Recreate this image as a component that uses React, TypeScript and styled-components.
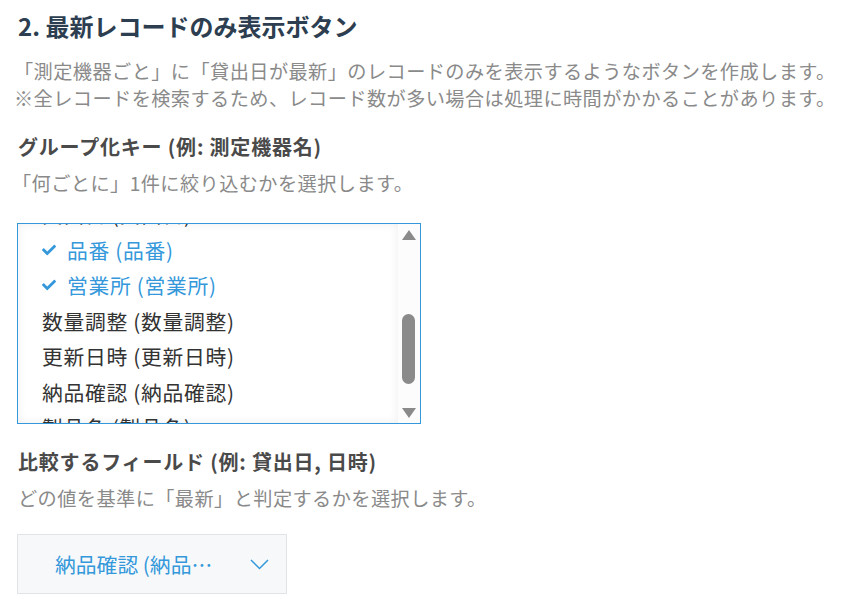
import styled, { createGlobalStyle } from "styled-components";
import { useEffect, useRef } from "react";
import { FaCheck } from "react-icons/fa";

const GlobalStyle = createGlobalStyle`
  body {
    margin: 0;
    background: #ffffff;
    font-family: "Noto Sans CJK JP", "Noto Sans", sans-serif;
  }
`;

const Section = styled.div`
  padding: 11px 18px 0;
`;

const Title = styled.h2`
  margin: 0;
  font-size: 24px;
  line-height: 29px;
  font-weight: 700;
  color: #2c3e50;
`;

const Description = styled.p`
  margin: 18px 0 0 -4px;
  font-size: 19.2px;
  line-height: 27px;
  letter-spacing: 0.42px;
  white-space: nowrap;
  color: #8a8a8a;
`;

const Field = styled.div<{ $gap: number }>`
  margin-top: ${(p) => p.$gap}px;
`;

const Label = styled.h3`
  margin: 0;
  font-size: 20px;
  line-height: 28px;
  font-weight: 700;
  letter-spacing: 0.8px;
  color: #4a4a4a;
`;

const Hint = styled.p<{ $indent?: number }>`
  margin: 9px 0 0 ${(p) => p.$indent ?? 0}px;
  font-size: 19.2px;
  line-height: 27px;
  letter-spacing: 0.42px;
  color: #8a8a8a;
`;

const ListFrame = styled.div`
  display: flex;
  margin: 26px 0 0 -1px;
  width: 402px;
  height: 199px;
  border: 1px solid #3498db;
  background: #ffffff;
`;

const ListBox = styled.ul`
  flex: 1;
  margin: 0;
  padding: 0;
  list-style: none;
  overflow: hidden;
  box-shadow: inset 0 0 10px rgba(0, 0, 0, 0.07);
`;

const Option = styled.li<{ $selected: boolean }>`
  display: flex;
  align-items: center;
  gap: 11px;
  padding-left: 24px;
  height: 35.5px;
  font-size: 20.8px;
  letter-spacing: 0.7px;
  color: ${(p) => (p.$selected ? "#3498db" : "#333333")};
  white-space: nowrap;
`;

const ScrollBar = styled.div`
  display: flex;
  flex-direction: column;
  align-items: center;
  width: 22px;
  padding: 6px 0 5px;
  background: #fcfcfc;
`;

const Arrow = styled.div<{ $down?: boolean }>`
  width: 0;
  height: 0;
  border-left: 7px solid transparent;
  border-right: 7px solid transparent;
  ${(p) =>
    p.$down
      ? "border-top: 10px solid #8a8a8a;"
      : "border-bottom: 10px solid #8a8a8a;"}
`;

const Track = styled.div`
  flex: 1;
  display: flex;
  justify-content: center;
`;

const Thumb = styled.div<{ $offset: number; $size: number }>`
  margin-top: ${(p) => p.$offset}px;
  margin-right: 1px;
  width: 13px;
  height: ${(p) => p.$size}px;
  border-radius: 7px;
  background: #8a8a8a;
`;

const SelectButton = styled.button`
  display: flex;
  align-items: center;
  margin-top: 22px;
  margin-left: -1px;
  width: 270px;
  height: 60px;
  padding: 0 17px 0 37px;
  border: 1px solid #e1e3e6;
  background: #f7f8fa;
  font-family: inherit;
  font-size: 20.8px;
  color: #3498db;
  cursor: pointer;
`;

const ButtonText = styled.span`
  max-width: 166px;
  overflow: hidden;
  text-overflow: ellipsis;
  white-space: nowrap;
`;

const Chevron = styled.svg`
  margin-left: auto;
`;

const fields = [
  { name: "レコード番号", selected: false },
  { name: "測定機器名", selected: false },
  { name: "貸出者", selected: false },
  { name: "返却予定日", selected: false },
  { name: "備考", selected: false },
  { name: "貸出日", selected: false },
  { name: "品番", selected: true },
  { name: "営業所", selected: true },
  { name: "数量調整", selected: false },
  { name: "更新日時", selected: false },
  { name: "納品確認", selected: false },
  { name: "製品名", selected: false },
  { name: "作成日時", selected: false },
];

export default function App() {
  const listRef = useRef<HTMLUListElement>(null);

  useEffect(() => {
    if (listRef.current) listRef.current.scrollTop = 205;
  }, []);

  return (
    <Section>
      <GlobalStyle />
      <Title>2. 最新レコードのみ表示ボタン</Title>
      <Description>
        「測定機器ごと」に「貸出日が最新」のレコードのみを表示するようなボタンを作成します。
        <br />
        ※全レコードを検索するため、レコード数が多い場合は処理に時間がかかることがあります。
      </Description>

      <Field $gap={21}>
        <Label>グループ化キー (例: 測定機器名)</Label>
        <Hint $indent={-6}>「何ごとに」1件に絞り込むかを選択します。</Hint>
        <ListFrame>
          <ListBox ref={listRef}>
            {fields.map((f) => (
              <Option key={f.name} $selected={f.selected}>
                {f.selected && <FaCheck size={14} />}
                {f.name} ({f.name})
              </Option>
            ))}
          </ListBox>
          <ScrollBar>
            <Arrow />
            <Track>
              <Thumb $offset={74} $size={70} />
            </Track>
            <Arrow $down />
          </ScrollBar>
        </ListFrame>
      </Field>

      <Field $gap={24}>
        <Label>比較するフィールド (例: 貸出日, 日時)</Label>
        <Hint>どの値を基準に「最新」と判定するかを選択します。</Hint>
        <SelectButton>
          <ButtonText>納品確認 (納品確認)</ButtonText>
          <Chevron width="19" height="11" viewBox="0 0 19 11">
            <polyline
              points="1,1 9.5,9.5 18,1"
              fill="none"
              stroke="#3498db"
              strokeWidth="1.5"
            />
          </Chevron>
        </SelectButton>
      </Field>
    </Section>
  );
}
